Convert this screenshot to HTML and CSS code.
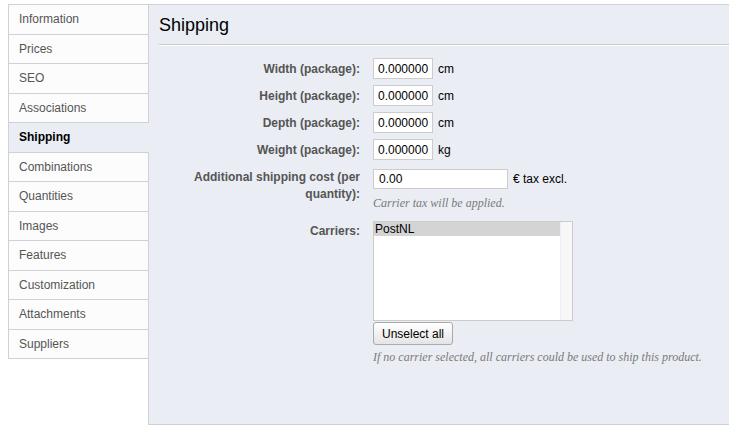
FILE: index.html
```html
<!DOCTYPE html>
<html lang="en">
<head>
    <meta charset="UTF-8">
    <title>Product - Shipping</title>
    <link rel="stylesheet" href="styles.css">
</head>
<body>
    <div class="page">
        <ul class="tabs">
            <li>Information</li>
            <li>Prices</li>
            <li>SEO</li>
            <li>Associations</li>
            <li class="active">Shipping</li>
            <li>Combinations</li>
            <li>Quantities</li>
            <li>Images</li>
            <li>Features</li>
            <li>Customization</li>
            <li>Attachments</li>
            <li>Suppliers</li>
        </ul>

        <div class="panel">
            <h3 class="panel-title">Shipping</h3>

            <div class="form">
                <div class="row">
                    <label class="lbl" for="width">Width (package):</label>
                    <div class="field"><input class="num" id="width" value="0.000000"> <span>cm</span></div>
                </div>
                <div class="row">
                    <label class="lbl" for="height">Height (package):</label>
                    <div class="field"><input class="num" id="height" value="0.000000"> <span>cm</span></div>
                </div>
                <div class="row">
                    <label class="lbl" for="depth">Depth (package):</label>
                    <div class="field"><input class="num" id="depth" value="0.000000"> <span>cm</span></div>
                </div>
                <div class="row">
                    <label class="lbl" for="weight">Weight (package):</label>
                    <div class="field"><input class="num" id="weight" value="0.000000"> <span>kg</span></div>
                </div>

                <div class="row row-top cost-row">
                    <label class="lbl lbl-wrap" for="cost">Additional shipping cost (per quantity):</label>
                    <div class="field-col">
                        <div class="field"><input class="cost" id="cost" value="0.00"> <span>€ tax excl.</span></div>
                        <p class="hint">Carrier tax will be applied.</p>
                    </div>
                </div>

                <div class="row row-top carriers-row">
                    <label class="lbl lbl-carriers">Carriers:</label>
                    <div class="field-col">
                        <div class="listbox">
                            <div class="options">
                                <div class="option selected">PostNL</div>
                            </div>
                            <div class="scroll"></div>
                        </div>
                        <button class="btn" type="button">Unselect all</button>
                        <p class="hint">If no carrier selected, all carriers could be used to ship this product.</p>
                    </div>
                </div>
            </div>
        </div>
    </div>
</body>
</html>
```

FILE: styles.css
```css
body { margin: 0; font-family: "Liberation Sans", Arial, sans-serif; font-size: 12px; color: #222; background: #fff; }
.page { display: flex; align-items: flex-start; padding: 4px 0 0 8px; }

.tabs { list-style: none; margin: 0 -1px 0 0; padding: 0; width: 139px; border: 1px solid #cfd1d6; border-bottom: none; position: relative; z-index: 1; flex-shrink: 0; }
.tabs li { height: 28.5px; line-height: 28px; padding-left: 10px; border-bottom: 1px solid #cfd1d6; background: #fcfcfc; color: #555; }
.tabs li.active { background: #eaedf4; color: #000; font-weight: bold; margin-right: -1px; }

.panel { flex: 1; height: 419px; background: #eaedf4; border: 1px solid #cfd1d6; border-right: none; }
.panel-title { margin: 0 0 0 10px; padding: 9px 0 0; height: 30px; font-size: 18px; font-weight: normal; line-height: 22px; color: #000; border-bottom: 1px solid #cacaca; box-shadow: 0 1px 0 #fff; }

.form { margin-top: 10px; }
.row { display: flex; align-items: center; height: 27px; }
.row-top { align-items: flex-start; height: auto; }
.lbl { width: 224px; padding-right: 13px; text-align: right; font-weight: bold; color: #555; flex-shrink: 0; box-sizing: border-box; }
.field { display: flex; align-items: center; gap: 5px; color: #000; }
.field-col { display: flex; flex-direction: column; align-items: flex-start; }

input { font-family: inherit; font-size: 12px; color: #000; border: 1px solid #ccc; background: #fff; padding: 0 2px 0 4px; margin: 0; box-sizing: border-box; outline: none; }
.num { width: 60px; height: 21px; }
.cost { width: 135px; height: 20px; padding-left: 5px; }

.cost-row { margin-top: 6px; }
.lbl-wrap { line-height: 17px; margin-top: 0; }
.hint { margin: 7px 0 0; font-family: "Liberation Serif", Georgia, serif; font-style: italic; font-size: 12px; color: #7a7a7a; }

.carriers-row { margin-top: 10px; }
.lbl-carriers { padding-top: 3px; }
.listbox { display: flex; width: 200px; height: 100px; border: 1px solid #ccc; background: #fff; box-sizing: border-box; }
.options { flex: 1; }
.option { height: 14px; line-height: 14px; padding-left: 1px; color: #000; }
.option.selected { background: #d4d4d4; }
.scroll { width: 11px; background: #f7f7f7; border-left: 1px solid #eee; }

.btn { margin-top: 1px; width: 80px; height: 23px; font-family: inherit; font-size: 12px; color: #000; border: 1px solid #aaa; border-radius: 3px; background: linear-gradient(#fff, #e4e4e4); padding: 0; }
.carriers-row .hint { margin-top: 5px; }
```
